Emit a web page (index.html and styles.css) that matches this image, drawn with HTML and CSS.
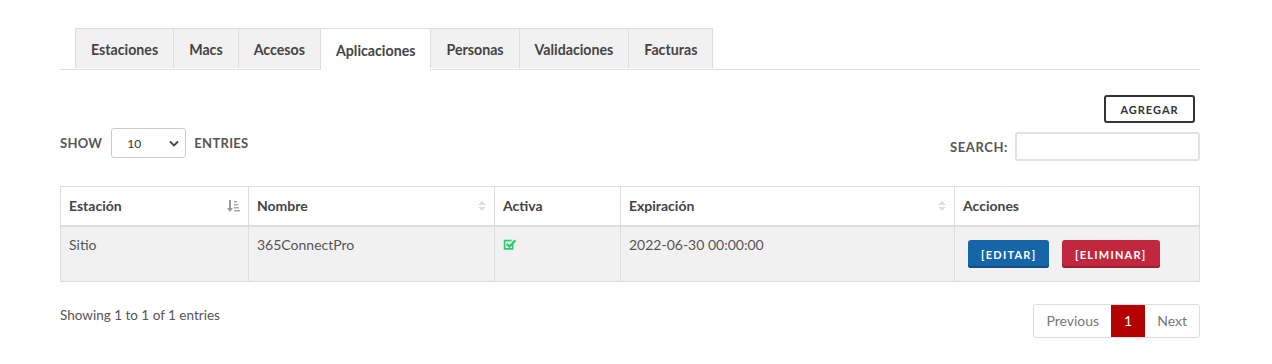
FILE: index.html
```html
<!DOCTYPE html>
<html lang="en">
<head>
    <meta charset="UTF-8">
    <meta name="viewport" content="width=device-width, initial-scale=1.0">
    <title>Aplicaciones</title>
    <link rel="stylesheet" href="styles.css">
</head>
<body>
    <div class="page">
        <ul class="tabs">
            <li class="tab">Estaciones</li>
            <li class="tab">Macs</li>
            <li class="tab">Accesos</li>
            <li class="tab active">Aplicaciones</li>
            <li class="tab">Personas</li>
            <li class="tab">Validaciones</li>
            <li class="tab">Facturas</li>
        </ul>

        <div class="toolbar">
            <button type="button" class="add-button">Agregar</button>
        </div>

        <div class="table-controls">
            <div class="length">
                <span class="label">Show</span>
                <div class="select">
                    <span>10</span>
                    <svg width="10" height="7" viewBox="0 0 10 7"><path d="M1 1.5 L5 5.5 L9 1.5" fill="none" stroke="#444" stroke-width="1.8"/></svg>
                </div>
                <span class="label">Entries</span>
            </div>
            <div class="search">
                <span class="label search-label">Search:</span>
                <input type="text" class="search-input">
            </div>
        </div>

        <table class="data-table">
            <thead>
                <tr>
                    <th class="col-estacion">Estación
                        <svg class="sort" width="14" height="14" viewBox="0 0 14 14">
                            <rect x="2" y="1" width="2" height="9" fill="#999"/>
                            <path d="M0 9 L6 9 L3 13 Z" fill="#999"/>
                            <rect x="7" y="2" width="3" height="1.5" fill="#aaa"/>
                            <rect x="7" y="5" width="4" height="1.5" fill="#aaa"/>
                            <rect x="7" y="8" width="5" height="1.5" fill="#aaa"/>
                            <rect x="7" y="11" width="6" height="1.5" fill="#aaa"/>
                        </svg>
                    </th>
                    <th class="col-nombre">Nombre
                        <svg class="sort" width="10" height="14" viewBox="0 0 10 14"><path d="M1 6 L5 2 L9 6 Z M1 8 L5 12 L9 8 Z" fill="#ddd"/></svg>
                    </th>
                    <th class="col-activa">Activa</th>
                    <th class="col-exp">Expiración
                        <svg class="sort" width="10" height="14" viewBox="0 0 10 14"><path d="M1 6 L5 2 L9 6 Z M1 8 L5 12 L9 8 Z" fill="#ddd"/></svg>
                    </th>
                    <th>Acciones</th>
                </tr>
            </thead>
            <tbody>
                <tr>
                    <td>Sitio</td>
                    <td>365ConnectPro</td>
                    <td>
                        <svg class="check" width="14" height="13" viewBox="0 0 13 12">
                            <path d="M9 5.5 V10 H1.5 V2.5 H8" fill="none" stroke="#2ecc71" stroke-width="1.6"/>
                            <path d="M3.5 5.5 L6 8 L11.5 2" fill="none" stroke="#2ecc71" stroke-width="2.2"/>
                        </svg>
                    </td>
                    <td>2022-06-30 00:00:00</td>
                    <td class="actions">
                        <button type="button" class="btn btn-edit">[Editar]</button>
                        <button type="button" class="btn btn-delete">[Eliminar]</button>
                    </td>
                </tr>
            </tbody>
        </table>

        <div class="table-footer">
            <div class="info">Showing 1 to 1 of 1 entries</div>
            <div class="pagination">
                <span class="page-item">Previous</span>
                <span class="page-item current">1</span>
                <span class="page-item">Next</span>
            </div>
        </div>
    </div>
</body>
</html>
```

FILE: styles.css
```css
body {
    font-family: Lato, "Open Sans", sans-serif;
    margin: 0;
    padding: 0;
    background: #ffffff;
    color: #555555;
}
.page {
    width: 1140px;
    margin-left: 60px;
    padding-top: 28px;
}
.tabs {
    list-style: none;
    margin: 0;
    padding: 0 0 0 15px;
    display: flex;
    border-bottom: 1px solid #dddddd;
}
.tab {
    background: #f1f1f1;
    border: 1px solid #dddddd;
    border-right: none;
    border-bottom: none;
    padding: 0 15px;
    height: 39px;
    line-height: 41px;
    font-size: 14.2px;
    font-weight: bold;
    color: #444444;
    margin-bottom: -1px;
}
.tab:last-child {
    border-right: 1px solid #dddddd;
}
.tab.active {
    background: #ffffff;
    height: 41px;
    line-height: 43px;
}
.toolbar {
    display: flex;
    justify-content: flex-end;
    padding-top: 25px;
    padding-right: 5px;
}
.add-button {
    background: #ffffff;
    border: 2px solid #333333;
    border-radius: 3px;
    width: 91px;
    height: 28px;
    font-family: Lato, sans-serif;
    font-size: 11px;
    font-weight: bold;
    letter-spacing: 1px;
    text-transform: uppercase;
    color: #333333;
    padding: 0;
}
.table-controls {
    display: flex;
    justify-content: space-between;
    align-items: flex-start;
    margin-top: 5px;
}
.label {
    font-size: 13px;
    font-weight: bold;
    text-transform: uppercase;
    letter-spacing: 0.3px;
    color: #555555;
}
.search-label {
    letter-spacing: 0.6px;
}
.length {
    display: flex;
    align-items: center;
    gap: 9px;
    height: 30px;
}
.length .select {
    margin-right: -1px;
}
.select {
    display: flex;
    align-items: center;
    justify-content: space-between;
    border: 1px solid #cccccc;
    border-radius: 3px;
    padding: 0 6px 0 15px;
    box-sizing: border-box;
    width: 75px;
    height: 30px;
    font-size: 12px;
    color: #333333;
}
.search {
    display: flex;
    align-items: center;
    gap: 7px;
    margin-top: 4px;
}
.search-input {
    width: 185px;
    height: 29px;
    box-sizing: border-box;
    border: 2px solid #e2e2e2;
    border-radius: 3px;
    margin: 0;
}
.data-table {
    width: 100%;
    border-collapse: collapse;
    margin-top: 25px;
    font-size: 14px;
}
.data-table th,
.data-table td {
    border: 1px solid #dddddd;
    text-align: left;
    padding: 0 8px;
}
.data-table th {
    height: 36px;
    padding-bottom: 2px;
    font-weight: bold;
    color: #444444;
    position: relative;
    border-bottom: 2px solid #dddddd;
}
.data-table td {
    background: #f1f1f1;
    height: 55px;
    vertical-align: top;
    padding-top: 9px;
    box-sizing: border-box;
    color: #555555;
}
.col-estacion { width: 171px; }
.col-nombre { width: 229px; }
.col-activa { width: 109px; }
.col-exp { width: 317px; }
.sort {
    position: absolute;
    right: 7px;
    top: 12px;
}
.check {
    margin-top: 2px;
}
.data-table td.actions {
    padding: 13px 0 0 13px;
}
.btn {
    border: none;
    border-radius: 3px;
    height: 28px;
    padding: 0 13px;
    font-family: Lato, sans-serif;
    font-size: 11px;
    font-weight: bold;
    letter-spacing: 1.25px;
    text-transform: uppercase;
    color: #ffffff;
    margin-right: 9px;
}
.btn-edit {
    background: #1565a8;
    box-shadow: inset 0 -2px 0 #0f4f86;
}
.btn-delete {
    background: #c1283f;
    box-shadow: inset 0 -2px 0 #9e1f33;
}
.table-footer {
    display: flex;
    justify-content: space-between;
    align-items: flex-start;
    margin-top: 22px;
}
.info {
    font-size: 13.5px;
    color: #555555;
    padding-top: 3px;
}
.pagination {
    display: flex;
    border: 1px solid #dddddd;
    border-radius: 3px;
    height: 32px;
    overflow: hidden;
}
.page-item {
    display: flex;
    align-items: center;
    padding: 0 12px;
    font-size: 14px;
    color: #777777;
}
.page-item.current {
    background: #b30000;
    color: #ffffff;
    padding: 0 13px;
}
```
